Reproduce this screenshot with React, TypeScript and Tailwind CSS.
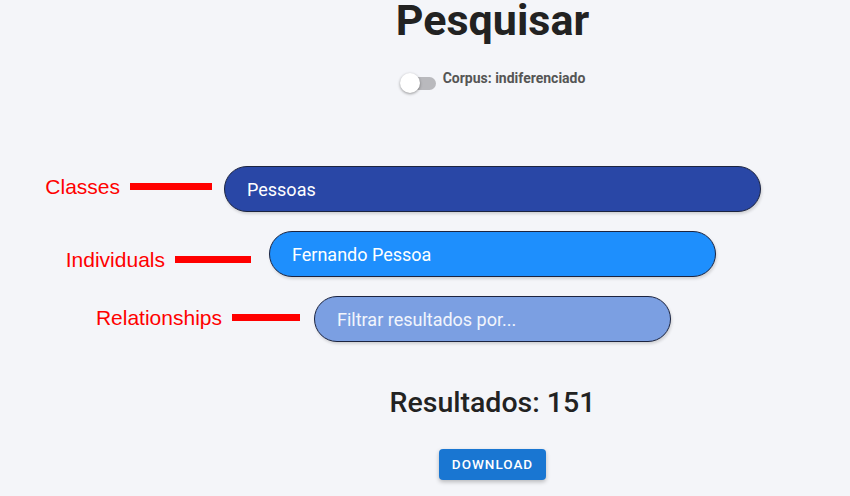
const roboto = { fontFamily: 'Roboto, "Liberation Sans", sans-serif' }

interface FilterBarProps {
  label: string
  value: string
  color: string
  width: string
  lineWidth: string
  gap: string
  offset: string
  placeholder?: boolean
}

function FilterBar({ label, value, color, width, lineWidth, gap, offset, placeholder }: FilterBarProps) {
  return (
    <div className={`relative ${width}`}>
      <div
        className={`flex h-[46px] items-center rounded-full border-[1.5px] border-[#1c2440] pl-[22px] text-[18px] shadow-[1px_2px_3px_rgba(0,0,0,0.15)] ${color} ${
          placeholder ? 'text-white/90' : 'text-white'
        }`}
      >
        {value}
      </div>
      {/* red annotation pointing at the bar */}
      <div className={`absolute right-full flex h-[44px] items-center ${gap} ${offset}`}>
        <span className="font-['Liberation_Sans',sans-serif] text-[21px] leading-none text-[#ff0000]">{label}</span>
        <span className={`ml-[10px] h-[7px] bg-[#ff0000] ${lineWidth}`} />
      </div>
    </div>
  )
}

export default function App() {
  return (
    <div className="min-h-[496px] bg-[#f4f5f9] pl-[135px]" style={roboto}>
      <div className="flex flex-col items-center">
        <h1 className="-mt-[6px] text-[43px] leading-[52px] font-bold text-[#222222]">Pesquisar</h1>

        <div className="mt-[27px] flex items-center gap-[7px]">
          <div className="relative h-[20px] w-[36px]">
            <div className="absolute top-[4px] left-[6px] h-[13px] w-[30px] rounded-full bg-[#b9b9bd]" />
            <div className="absolute top-0 left-0 h-[20px] w-[20px] rounded-full bg-white shadow-[0_1px_3px_rgba(0,0,0,0.4)]" />
          </div>
          <span className="-mt-[9px] text-[14px] font-bold text-[#555555]">Corpus: indiferenciado</span>
        </div>

        <div className="mt-[73px] flex flex-col items-center gap-[19px]">
          <FilterBar
            label="Classes"
            value="Pessoas"
            color="bg-[#2947a6]"
            width="w-[537px]"
            lineWidth="w-[82px]"
            gap="mr-[12px]"
            offset="-top-[2px]"
          />
          <FilterBar
            label="Individuals"
            value="Fernando Pessoa"
            color="bg-[#1e8ffd]"
            width="w-[447px]"
            lineWidth="w-[76px]"
            gap="mr-[18px]"
            offset="top-[6px]"
          />
          <FilterBar
            label="Relationships"
            value="Filtrar resultados por..."
            color="bg-[#7b9fe2]"
            width="w-[357px]"
            lineWidth="w-[68px]"
            gap="mr-[14px]"
            offset="-top-[1px]"
            placeholder
          />
        </div>

        <h2 className="mt-[40px] text-[28.5px] font-medium text-[#222222]">Resultados: 151</h2>

        <button className="mt-[24px] h-[31px] w-[107px] rounded-[4px] bg-[#1976d2] text-[13.5px] font-medium tracking-[1px] text-white shadow-[0_2px_4px_rgba(0,0,0,0.25)]">
          DOWNLOAD
        </button>
      </div>
    </div>
  )
}
